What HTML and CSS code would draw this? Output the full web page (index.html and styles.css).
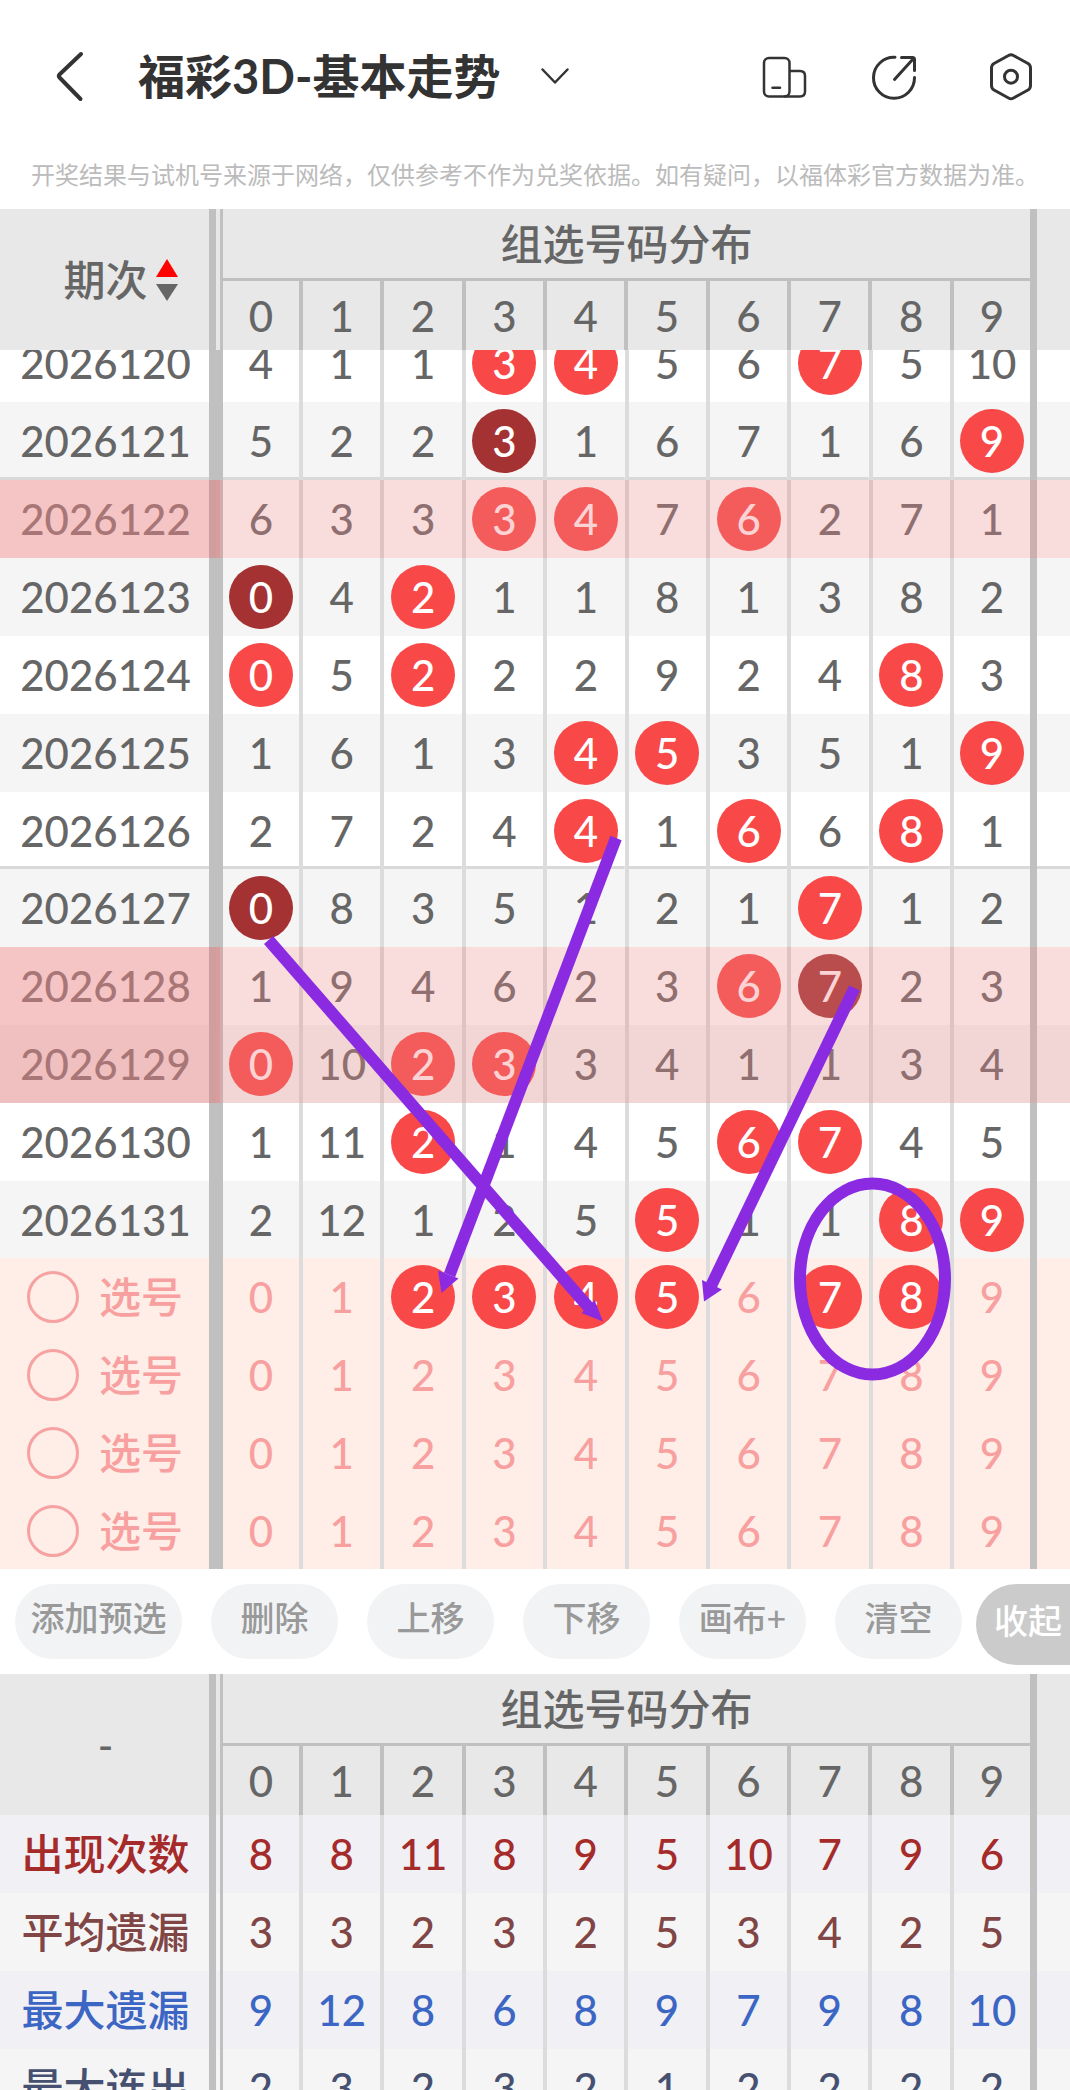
FILE: index.html
```html
<!DOCTYPE html>
<html lang="zh-CN">
<head>
<meta charset="utf-8">
<meta name="viewport" content="width=device-width, initial-scale=1">
<title>福彩3D-基本走势</title>
<link rel="stylesheet" href="styles.css">
</head>
<body>
<div class="app">
  <header class="topbar">
    <button class="icon-btn back" type="button" aria-label="返回">
      <svg width="28" height="48" viewBox="0 0 28 48"><path d="M25 2 3.500 22.500Q2 24 3.500 25.500L24.500 47" fill="none" stroke="currentColor" stroke-width="4" stroke-linecap="round" stroke-linejoin="round"/></svg>
    </button>
    <h1 class="title">福彩3D-基本走势</h1>
    <button class="icon-btn" type="button" aria-label="切换走势">
      <svg width="28" height="16" viewBox="0 0 28 16"><path d="M1.500 1.500 14 14.500 26.500 1.500" fill="none" stroke="currentColor" stroke-width="2.500" stroke-linecap="round" stroke-linejoin="round"/></svg>
    </button>
    <nav class="actions">
      <button class="icon-btn" type="button" aria-label="横竖屏">
        <svg width="54" height="54" viewBox="0 0 54 54" fill="none" stroke="currentColor" stroke-width="2.500" stroke-linecap="round"><rect x="12" y="9" width="25.500" height="38.500" rx="5"/><path d="M38 22h10q5 0 5 5v15.500q0 5-5 5H33"/><path d="M20.500 38.700h7.500"/></svg>
      </button>
      <button class="icon-btn" type="button" aria-label="分享">
        <svg width="54" height="54" viewBox="0 0 54 54" fill="none" stroke="currentColor" stroke-width="3" stroke-linecap="round" stroke-linejoin="round"><path d="M27 8.300A20.500 20.500 0 1 0 46.500 28.500"/><path d="M33.500 8.500h11q2 0 2 2v11M26.500 30.500 45.500 9.500"/></svg>
      </button>
      <button class="icon-btn" type="button" aria-label="设置">
        <svg width="54" height="54" viewBox="0 0 54 54" fill="none" stroke="currentColor" stroke-width="3" stroke-linejoin="round"><path d="M24.500 6.500Q27 5 29.500 6.500L44 14.500Q46.500 16 46.500 19V36.500Q46.500 39.500 44 41L29.500 49Q27 50.500 24.500 49L10 41Q7.500 39.500 7.500 36.500V19Q7.500 16 10 14.500Z"/><circle cx="27" cy="27.700" r="6.500"/></svg>
      </button>
    </nav>
  </header>
  <p class="notice">开奖结果与试机号来源于网络，仅供参考不作为兑奖依据。如有疑问，以福体彩官方数据为准。</p>

  <table class="grid head">
    <colgroup><col class="c-label"><col class="c-first"><col span="8"><col class="c-last"><col class="c-tail"></colgroup>
    <thead>
      <tr><th class="label split" rowspan="2"><button class="sort" type="button">期次<svg width="22" height="42" viewBox="0 0 22 42"><path d="M11 0 22 18H0Z" fill="#f00"/><path d="M0 25H22L11 42Z" fill="#666"/></svg></button></th><th class="span" colspan="10">组选号码分布</th><td class="tail" rowspan="2"></td></tr>
      <tr><th>0</th><th>1</th><th>2</th><th>3</th><th>4</th><th>5</th><th>6</th><th>7</th><th>8</th><th>9</th></tr>
    </thead>
  </table>

  <main class="board">
    <table class="grid draws">
      <colgroup><col class="c-label"><col class="c-first"><col span="8"><col class="c-last"><col class="c-tail"></colgroup>
      <tbody>
        <tr><th class="label" scope="row">2026120</th><td>4</td><td>1</td><td>1</td><td><span class="hit">3</span></td><td><span class="hit">4</span></td><td>5</td><td>6</td><td><span class="hit">7</span></td><td>5</td><td>10</td><td class="tail"></td></tr>
        <tr class="alt rule"><th class="label" scope="row">2026121</th><td>5</td><td>2</td><td>2</td><td><span class="hit multi">3</span></td><td>1</td><td>6</td><td>7</td><td>1</td><td>6</td><td><span class="hit">9</span></td><td class="tail"></td></tr>
      </tbody>
      <tbody>
        <tr class="marked"><th class="label" scope="row">2026122</th><td>6</td><td>3</td><td>3</td><td><span class="hit">3</span></td><td><span class="hit">4</span></td><td>7</td><td><span class="hit">6</span></td><td>2</td><td>7</td><td>1</td><td class="tail"></td></tr>
        <tr class="alt"><th class="label" scope="row">2026123</th><td><span class="hit multi">0</span></td><td>4</td><td><span class="hit">2</span></td><td>1</td><td>1</td><td>8</td><td>1</td><td>3</td><td>8</td><td>2</td><td class="tail"></td></tr>
        <tr><th class="label" scope="row">2026124</th><td><span class="hit">0</span></td><td>5</td><td><span class="hit">2</span></td><td>2</td><td>2</td><td>9</td><td>2</td><td>4</td><td><span class="hit">8</span></td><td>3</td><td class="tail"></td></tr>
        <tr class="alt"><th class="label" scope="row">2026125</th><td>1</td><td>6</td><td>1</td><td>3</td><td><span class="hit">4</span></td><td><span class="hit">5</span></td><td>3</td><td>5</td><td>1</td><td><span class="hit">9</span></td><td class="tail"></td></tr>
        <tr class="rule short"><th class="label" scope="row">2026126</th><td>2</td><td>7</td><td>2</td><td>4</td><td><span class="hit">4</span></td><td>1</td><td><span class="hit">6</span></td><td>6</td><td><span class="hit">8</span></td><td>1</td><td class="tail"></td></tr>
      </tbody>
      <tbody>
        <tr class="alt"><th class="label" scope="row">2026127</th><td><span class="hit multi">0</span></td><td>8</td><td>3</td><td>5</td><td>1</td><td>2</td><td>1</td><td><span class="hit">7</span></td><td>1</td><td>2</td><td class="tail"></td></tr>
        <tr class="marked"><th class="label" scope="row">2026128</th><td>1</td><td>9</td><td>4</td><td>6</td><td>2</td><td>3</td><td><span class="hit">6</span></td><td><span class="hit multi">7</span></td><td>2</td><td>3</td><td class="tail"></td></tr>
        <tr class="marked alt"><th class="label" scope="row">2026129</th><td><span class="hit">0</span></td><td>10</td><td><span class="hit">2</span></td><td><span class="hit">3</span></td><td>3</td><td>4</td><td>1</td><td>1</td><td>3</td><td>4</td><td class="tail"></td></tr>
        <tr><th class="label" scope="row">2026130</th><td>1</td><td>11</td><td><span class="hit">2</span></td><td>1</td><td>4</td><td>5</td><td><span class="hit">6</span></td><td><span class="hit">7</span></td><td>4</td><td>5</td><td class="tail"></td></tr>
        <tr class="alt short"><th class="label" scope="row">2026131</th><td>2</td><td>12</td><td>1</td><td>2</td><td>5</td><td><span class="hit">5</span></td><td>1</td><td>1</td><td><span class="hit">8</span></td><td><span class="hit">9</span></td><td class="tail"></td></tr>
      </tbody>
      <tbody class="picks">
        <tr><th class="label" scope="row"><label class="choose"><input type="radio" name="pick">选号</label></th><td><button type="button">0</button></td><td><button type="button">1</button></td><td><button type="button" class="hit">2</button></td><td><button type="button" class="hit">3</button></td><td><button type="button" class="hit">4</button></td><td><button type="button" class="hit">5</button></td><td><button type="button">6</button></td><td><button type="button" class="hit">7</button></td><td><button type="button" class="hit">8</button></td><td><button type="button">9</button></td><td class="tail"></td></tr>
        <tr><th class="label" scope="row"><label class="choose"><input type="radio" name="pick">选号</label></th><td><button type="button">0</button></td><td><button type="button">1</button></td><td><button type="button">2</button></td><td><button type="button">3</button></td><td><button type="button">4</button></td><td><button type="button">5</button></td><td><button type="button">6</button></td><td><button type="button">7</button></td><td><button type="button">8</button></td><td><button type="button">9</button></td><td class="tail"></td></tr>
        <tr><th class="label" scope="row"><label class="choose"><input type="radio" name="pick">选号</label></th><td><button type="button">0</button></td><td><button type="button">1</button></td><td><button type="button">2</button></td><td><button type="button">3</button></td><td><button type="button">4</button></td><td><button type="button">5</button></td><td><button type="button">6</button></td><td><button type="button">7</button></td><td><button type="button">8</button></td><td><button type="button">9</button></td><td class="tail"></td></tr>
        <tr class="short"><th class="label" scope="row"><label class="choose"><input type="radio" name="pick">选号</label></th><td><button type="button">0</button></td><td><button type="button">1</button></td><td><button type="button">2</button></td><td><button type="button">3</button></td><td><button type="button">4</button></td><td><button type="button">5</button></td><td><button type="button">6</button></td><td><button type="button">7</button></td><td><button type="button">8</button></td><td><button type="button">9</button></td><td class="tail"></td></tr>
      </tbody>
    </table>
    <!-- Hand-drawn canvas marks, in board coordinates -->
    <svg class="canvas" viewBox="0 0 1070 1219" preserveAspectRatio="none" aria-hidden="true">
      <g fill="none" stroke="#8a2be2" stroke-width="12">
        <path d="M268.500 590 591 960"/>
        <path d="M616 488 449.500 925"/>
        <path d="M854.500 638 711.500 935"/>
        <ellipse cx="872.500" cy="929" rx="72.500" ry="95.500"/>
      </g>
      <g fill="#8a2be2">
        <path d="M603 971.500 581.500 963 594.500 950Z"/>
        <path d="M441.500 943 438 920.500 458.500 928.500Z"/>
        <path d="M704 951.500 702 930 722 939.500Z"/>
      </g>
    </svg>
  </main>

  <div class="toolbar">
    <button type="button" class="add">添加预选</button>
    <button type="button">删除</button>
    <button type="button">上移</button>
    <button type="button">下移</button>
    <button type="button">画布+</button>
    <button type="button">清空</button>
    <button type="button" class="fold">收起</button>
  </div>

  <section class="stats">
    <table class="grid head">
      <colgroup><col class="c-label"><col class="c-first"><col span="8"><col class="c-last"><col class="c-tail"></colgroup>
      <thead>
        <tr><th class="label split" rowspan="2">-</th><th class="span" colspan="10">组选号码分布</th><td class="tail" rowspan="2"></td></tr>
        <tr><th>0</th><th>1</th><th>2</th><th>3</th><th>4</th><th>5</th><th>6</th><th>7</th><th>8</th><th>9</th></tr>
      </thead>
      <tbody>
        <tr class="count"><th class="label split" scope="row">出现次数</th><td>8</td><td>8</td><td>11</td><td>8</td><td>9</td><td>5</td><td>10</td><td>7</td><td>9</td><td>6</td><td class="tail"></td></tr>
        <tr class="average"><th class="label split" scope="row">平均遗漏</th><td>3</td><td>3</td><td>2</td><td>3</td><td>2</td><td>5</td><td>3</td><td>4</td><td>2</td><td>5</td><td class="tail"></td></tr>
        <tr class="longest"><th class="label split" scope="row">最大遗漏</th><td>9</td><td>12</td><td>8</td><td>6</td><td>8</td><td>9</td><td>7</td><td>9</td><td>8</td><td>10</td><td class="tail"></td></tr>
        <tr class="streak"><th class="label split" scope="row">最大连出</th><td>2</td><td>3</td><td>2</td><td>3</td><td>2</td><td>1</td><td>2</td><td>2</td><td>2</td><td>2</td><td class="tail"></td></tr>
      </tbody>
    </table>
  </section>
</div>
</body>
</html>
```
FILE: styles.css
```css
* { box-sizing: border-box; }

body {
  margin: 0;
  background: #fff;
  color: #666;
  font-family: Lato, "Noto Sans CJK SC", sans-serif;
}

button {
  margin: 0;
  padding: 0;
  border: 0;
  background: none;
  color: inherit;
  font: inherit;
}

.app {
  display: flex;
  flex-direction: column;
  height: 100vh;
  overflow: hidden;
}

.app > * { flex: none; }

/* Top bar */
.topbar {
  display: flex;
  align-items: center;
  height: 152px;
  padding: 0 32px 0 56px;
  color: #333;
}

.title {
  margin: 0 40px 0 54px;
  font-size: 47px;
  font-weight: 700;
  line-height: 60px;
  white-space: nowrap;
}

.icon-btn { display: flex; }
.icon-btn svg { overflow: visible; }

.actions {
  display: flex;
  gap: 62px;
  margin-left: auto;
}

.notice {
  margin: 0;
  padding-bottom: 13px;
  color: #bbb;
  font-family: "Noto Sans CJK SC", sans-serif;
  font-size: 24px;
  line-height: 44px;
  text-align: center;
  white-space: nowrap;
}

/* Shared number grid */
.grid {
  width: 100%;
  table-layout: fixed;
  border-collapse: separate;
  border-spacing: 0;
  font-size: 42px;
  line-height: 48px;
}

.c-label { width: 223px; }
.c-first { width: 76px; }
.c-last { width: 80px; }
.c-tail { width: 40px; }

.grid th,
.grid td {
  height: 78px;
  padding: 0;
  border-left: 4px solid #dcdcdc;
  font-weight: 500;
  text-align: center;
  white-space: nowrap;
}

.grid .short > * { height: 77px; }

.grid .label {
  padding-left: 2px;
  border-left: 0;
  border-right: 14px solid #c0c0c0;
}

.grid .label + td,
.grid .label + th { border-left: 0; }

.grid .tail { border-left: 7px solid #c0c0c0; }

.grid .split {
  padding-right: 14px;
  border-right: 0;
  background: linear-gradient(to right, #c0c0c0 7px, transparent 7px 11px, #c0c0c0 11px) right / 14px 100% no-repeat;
}

.head thead { background: #e8e8e8; }

.head thead th {
  height: 69px;
  border-left-color: #c0c0c0;
}

.head thead tr + tr th:first-child { border-left: 0; }

.head thead .span {
  height: 72px;
  border-bottom: 3px solid #c0c0c0;
}

.sort {
  display: flex;
  align-items: center;
  justify-content: center;
  gap: 8px;
  width: 100%;
  padding-left: 30px;
}

/* Draw history */
.board {
  position: relative;
  overflow: hidden;
}

.draws { margin-top: -26px; }

.alt { background: #f5f5f5; }

.rule > * {
  background: linear-gradient(#d9d9d9, #d9d9d9) bottom / 100% 3px no-repeat;
}

.hit {
  display: block;
  width: 64px;
  height: 64px;
  margin: 0 auto;
  border-radius: 50%;
  background: #f94848;
  color: #fff;
  line-height: 64px;
}

.multi { background: #a43232; }

.marked { background: #f9dcdc; color: #8f6f70; }
.marked.alt { background: #f2d6d6; }
.grid .marked td { border-left-color: #dfc2c2; }
.grid .marked .tail { border-left-color: #ccb0b0; }
.marked .hit { background: #f45c5c; color: #fcd3d4; }
.marked .multi { background: #b94c4c; }

.grid .marked .label {
  padding-right: 14px;
  border-right: 0;
  background: linear-gradient(to right, #cf9fa0 7px, #dc9c9c 7px 11px, #ccb0b0 11px) right / 14px 100% no-repeat #f5c4c4;
  color: #a87676;
}

.grid .marked.alt .label { background-color: #f0c0c0; }

/* Pick rows */
.picks { background: #feeee7; color: #f8a0a0; }

.picks button {
  display: block;
  width: 64px;
  height: 64px;
  margin: 0 auto;
  line-height: 64px;
}

.picks .hit { color: #fff; }

.choose {
  display: flex;
  align-items: center;
  gap: 20px;
  padding-left: 25px;
}

.choose input {
  width: 52px;
  height: 52px;
  margin: 0;
  border: 3px solid #f6a2a2;
  border-radius: 50%;
  appearance: none;
}

.canvas {
  position: absolute;
  inset: 0;
  width: 100%;
  height: 100%;
  pointer-events: none;
}

/* Toolbar */
.toolbar {
  display: flex;
  align-items: flex-start;
  gap: 29px;
  height: 105px;
  padding: 15px 0 0 15px;
  color: #999;
  font-size: 34px;
  font-weight: 500;
}

.toolbar button {
  display: flex;
  flex: none;
  justify-content: center;
  min-width: 127px;
  height: 75px;
  padding: 0 15px;
  border-radius: 38px;
  background: #f1f3f5;
  line-height: 68px;
}

.toolbar .add { min-width: 167px; }

.toolbar .fold {
  min-width: 94px;
  height: 81px;
  margin-left: auto;
  padding: 0 8px 0 18px;
  border-radius: 41px 0 0 41px;
  background: #cbcbcb;
  color: #fff;
  line-height: 74px;
}

/* The fold tab hugs the last tool */
.toolbar button:nth-last-child(2) { margin-right: -15px; }

/* Statistics */
.app > .stats {
  flex: 1 1 0;
  min-height: 0;
  overflow: hidden;
}

.count { background: #f1f0f5; color: #a52a2a; }
.average { background: #f5f5f5; color: #804545; }
.longest { background: #f1f0f5; color: #3c66c4; }
.streak { background: #f5f5f5; color: #465070; }
```
